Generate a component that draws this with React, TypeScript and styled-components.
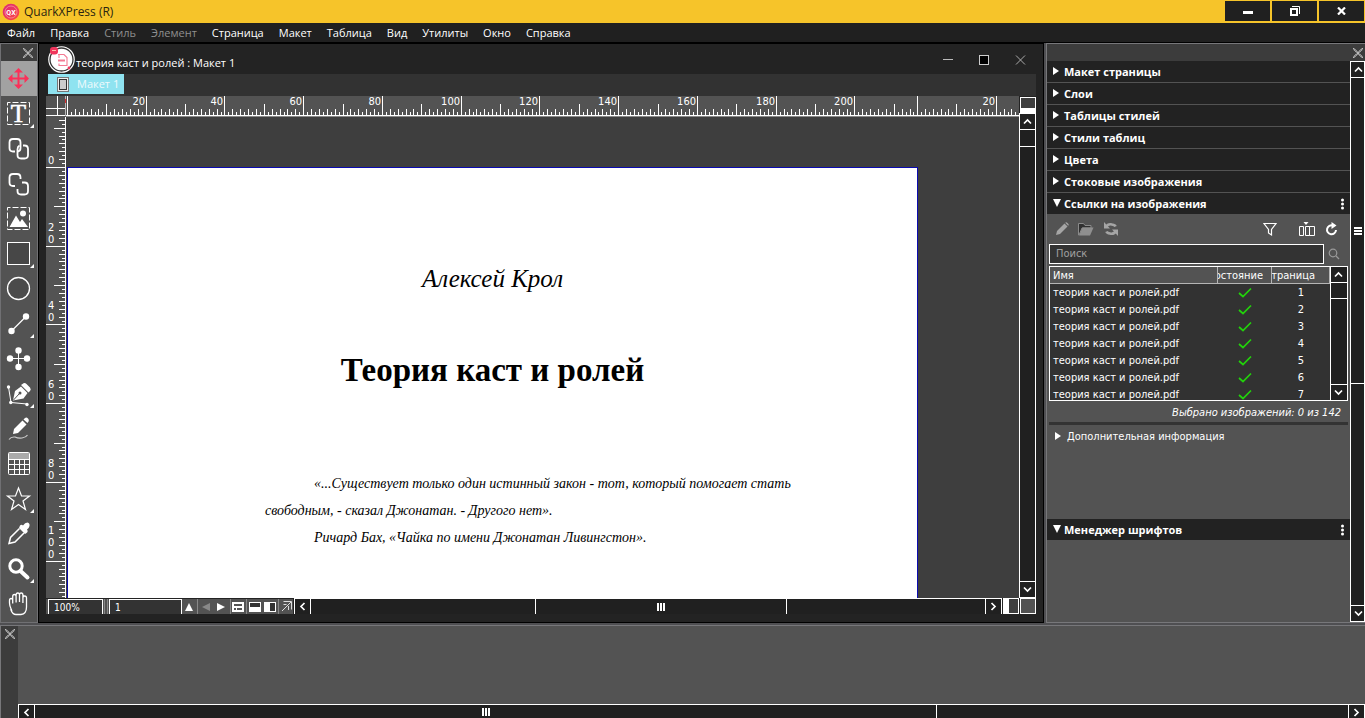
import React, { useLayoutEffect, useRef, useState } from "react";
import styled, { createGlobalStyle, css } from "styled-components";

const ui = `"Open Sans", "Noto Sans", sans-serif`;
const dense = `"DejaVu Sans Condensed", "DejaVu Sans", sans-serif`;
const serif = `"Liberation Serif", "Times New Roman", serif`;

const Global = createGlobalStyle`
  * { box-sizing: border-box; }
  body { margin: 0; background: #535353; color: #fff; font: 11px/16px ${ui}; overflow: hidden; }
  button { border: 0; padding: 0; margin: 0; background: none; color: inherit; font: inherit; }
  svg { display: block; }
`;

const Shell = styled.div`
  display: flex;
  flex-direction: column;
  height: 100vh;
  background: #4f4f52;
`;

/* ---------- application frame ---------- */

const AppBar = styled.header`
  display: flex;
  align-items: center;
  height: 23px;
  flex: none;
  padding: 0 1px 0 2px;
  gap: 4px;
  background: #f6c42a;
  color: #2b2410;
`;
const AppTitle = styled.h1`
  flex: 1;
  margin: 0;
  font-size: 12px;
  font-weight: 400;
`;
const FrameButtons = styled.div`
  display: flex;
  align-items: flex-start;
  gap: 2px;
  height: 21px;
`;
const FrameButton = styled.button`
  display: grid;
  place-items: center;
  width: 45px;
  height: 20px;
  background: #202020;
`;

const MenuBar = styled.nav`
  display: flex;
  align-items: center;
  gap: 15px;
  height: 20px;
  flex: none;
  padding: 0 7px;
  background: #202020;
  border-bottom: 1px solid #000;
`;
const MenuItem = styled.button`
  &:disabled { color: #8f8f8f; }
`;

const Workspace = styled.main`
  display: flex;
  flex: 1;
  min-height: 0;
`;

/* ---------- tools ---------- */

const Tools = styled.aside`
  display: flex;
  flex-direction: column;
  width: 38px;
  flex: none;
  background: #535353;
  border: 1px solid #707073;
  overflow: hidden;
`;
const ToolsHead = styled.div`
  display: flex;
  justify-content: flex-end;
  align-items: center;
  height: 17px;
  flex: none;
  padding-right: 4px;
  background: #3e3e3e;
`;
const ToolButton = styled.button<{ $active?: boolean }>`
  height: 35px;
  flex: none;
  color: #fff;
  ${(p) => p.$active && css`background: #a2a2a2; color: #fb3059;`}
`;

/* ---------- document window ---------- */

const DocWindow = styled.section`
  display: flex;
  flex-direction: column;
  flex: 1;
  min-width: 0;
  padding: 0 7px 8px;
  background: #232323;
  border: 1px solid #000;
`;
const DocBar = styled.div`
  display: flex;
  align-items: center;
  height: 30px;
  flex: none;
  padding: 0 8px 0 2px;
`;
const DocTitle = styled.h2`
  flex: 1;
  margin: 0;
  padding-top: 7px;
  font-size: 11px;
  font-weight: 400;
`;
const DocButtons = styled.div`
  display: flex;
  gap: 22px;
  padding: 2px 1px 0 0;
`;
const DocButton = styled.button`
  width: 14px;
  height: 14px;
`;
const Tabs = styled.div`
  display: flex;
  height: 22px;
  flex: none;
  margin-left: 2px;
  background: #323232;
`;
const Tab = styled.button`
  display: flex;
  align-items: center;
  gap: 8px;
  width: 76px;
  height: 20px;
  padding-left: 9px;
  background: #8fe3f0;
  color: #eefafc;
`;
const Board = styled.div`
  display: grid;
  grid-template-columns: 20px minmax(0, 1fr) 17px;
  grid-template-rows: 21px minmax(0, 1fr) 16px;
  flex: 1;
  min-height: 0;
`;
const RulerCell = styled.div`
  background: #535353;
  overflow: hidden;
  text { font: 11px ${dense}; fill: #fff; }
`;
const Canvas = styled.div`
  background: #3e3e3e;
  overflow: hidden;
  padding: 50px 0 0 1px;
`;
const SideColumn = styled.div`
  display: flex;
  flex-direction: column;
  grid-row: 1 / span 2;
  grid-column: 3;
  min-height: 0;
`;
const SplitButton = styled.button<{ $side: "top" | "left" }>`
  width: 16px;
  height: 16px;
  flex: none;
  background: #3e3e3e;
  border: 1px solid #fff;
  ${(p) => (p.$side === "top" ? css`margin: 1px 0 0 1px; border-bottom-width: 5px;` : css`border-left-width: 6px;`)}
`;
const Footer = styled.div`
  display: flex;
  grid-column: 1 / span 3;
  gap: 1px;
  min-width: 0;
`;
const FooterTools = styled.div`
  display: flex;
  flex: none;
  width: 247px;
  padding-left: 2px;
  background: #535353;
  border-top: 1px solid #232323;
`;
const FooterInput = styled.input<{ $w: number }>`
  width: ${(p) => p.$w}px;
  height: 15px;
  padding: 0 5px;
  background: #333;
  color: #fff;
  border: 1px solid #fff;
  border-bottom: 0;
  border-radius: 0;
  font: 10px ${dense};
`;
const Divider = styled.i`
  width: 1px;
  margin: 0 1px;
  background: #888;
`;
const FooterButton = styled.button<{ $w: number }>`
  display: grid;
  place-items: center;
  width: ${(p) => p.$w}px;
`;
const GrowBox = styled.span`
  width: 16px;
  height: 16px;
  background: #535353;
  border: 1px solid #fff;
`;

const Paper = styled.article`
  width: 851px;
  height: 1100px;
  padding-top: 96px;
  background: #fff;
  border: 1px solid #0a0ab0;
  color: #000;
  font-family: ${serif};
  font-style: italic;
`;
const Author = styled.p`
  margin: 0;
  font-size: 25px;
  line-height: 30px;
  text-align: center;
`;
const BookTitle = styled.h3`
  margin: 56px 0 0;
  font-size: 33px;
  line-height: 40px;
  font-style: normal;
  text-align: center;
`;
const Epigraph = styled.div`
  margin: 80px 0 0 197px;
  font-size: 14px;
  line-height: 27px;
`;
const Line = styled.p<{ $indent?: boolean }>`
  margin: 0;
  padding-left: ${(p) => (p.$indent ? 49 : 0)}px;
  white-space: nowrap;
`;

/* ---------- scroll bars ---------- */

const Scroll = styled.div<{ $vertical?: boolean }>`
  display: flex;
  flex: 1;
  min-width: 0;
  min-height: 0;
  background: #202020;
  border: 1px solid #fff;
  ${(p) => (p.$vertical ? css`flex-direction: column; width: 17px;` : css`border-bottom: 0;`)}
`;
const ScrollButton = styled.button`
  display: grid;
  place-items: center;
  width: 15px;
  height: 15px;
  flex: none;
`;
const Track = styled.div<{ $grow: number }>`
  flex: ${(p) => p.$grow} 1 0px;
  min-width: 0;
  min-height: 0;
`;
const Thumb = styled.div<{ $grow: number; $vertical?: boolean }>`
  display: grid;
  place-items: center;
  flex: ${(p) => p.$grow} 1 0px;
  border: 0 solid #fff;
  ${(p) => (p.$vertical ? css`border-width: 1px 0;` : css`border-width: 0 1px;`)}
`;
const Edge = styled.i<{ $vertical?: boolean }>`
  flex: none;
  background: #fff;
  ${(p) => (p.$vertical ? css`height: 1px;` : css`width: 1px;`)}
`;

/* ---------- palettes ---------- */

const Palettes = styled.aside`
  display: flex;
  flex-direction: column;
  width: 319px;
  flex: none;
  margin-left: 2px;
  background: #535353;
  border: 1px solid #77777a;
  border-right: 0;
`;
const PalettesHead = styled.div`
  display: flex;
  align-items: center;
  justify-content: flex-end;
  height: 17px;
  flex: none;
  padding-right: 2px;
  background: #3c3c3c;
`;
const PalettesBody = styled.div`
  display: flex;
  flex: 1;
  min-height: 0;
`;
const PaletteList = styled.div`
  flex: 1;
  min-width: 0;
  overflow: hidden;
`;
const PaletteScroll = styled.div`
  display: flex;
  width: 15px;
  overflow: hidden;
`;
const PaletteHeader = styled.button`
  display: flex;
  align-items: center;
  width: 100%;
  height: 22px;
  padding: 0 4px 0 5px;
  gap: 3px;
  background: #222;
  border-bottom: 1px solid #535353;
  font-weight: 700;
  text-align: left;
`;
const Grow = styled.span`
  flex: 1;
`;
const LinksPanel = styled.div`
  height: 304px;
  padding: 0 2px;
`;
const IconRow = styled.div`
  display: flex;
  align-items: center;
  gap: 9px;
  height: 29px;
  padding: 0 10px 1px 6px;
`;
const IconButton = styled.button<{ $w: number; $dim?: boolean }>`
  width: ${(p) => p.$w}px;
  color: ${(p) => (p.$dim ? "#a5a5a5" : "#fff")};
`;
const SearchRow = styled.div`
  display: flex;
  align-items: center;
  gap: 4px;
`;
const SearchInput = styled.input`
  flex: 0 0 275px;
  height: 20px;
  padding: 0 6px 2px;
  background: #333;
  border: 1px solid #fff;
  border-radius: 0;
  font: 11px ${dense};
  color: #fff;
  &::placeholder { color: #a0a0a0; opacity: 1; }
`;
const ListBox = styled.div`
  display: flex;
  width: 299px;
  height: 135px;
  margin-top: 2px;
  border: 1px solid #fff;
  background: #323232;
`;
const ListClip = styled.div`
  flex: 1;
  overflow: hidden;
`;
const LinksTable = styled.table`
  width: 100%;
  table-layout: fixed;
  border-collapse: separate;
  border-spacing: 0;
  font: 11px/16px ${dense};
`;
const Th = styled.th<{ $w?: number; $pad?: number }>`
  width: ${(p) => (p.$w ? `${p.$w}px` : "auto")};
  height: 17px;
  padding: 1px ${(p) => p.$pad ?? 0}px 0 ${(p) => (p.$pad ? 0 : 3)}px;
  background: #535353;
  border-right: 1px solid #b5b5b5;
  border-bottom: 1px solid #b5b5b5;
  font-weight: 400;
  line-height: 15px;
  text-align: left;
`;
const ThClip = styled.div<{ $end?: boolean }>`
  display: flex;
  justify-content: ${(p) => (p.$end ? "flex-end" : "flex-start")};
  overflow: hidden;
`;
const Td = styled.td<{ $center?: boolean }>`
  height: 17px;
  padding: 1px 0 0 ${(p) => (p.$center ? 0 : 3)}px;
  text-align: ${(p) => (p.$center ? "center" : "left")};
  white-space: nowrap;
  svg { margin: 0 auto; }
`;
const ListScroll = styled.div`
  display: flex;
  width: 18px;
  margin: -1px -1px -1px 0;
`;
const Summary = styled.p`
  margin: 0;
  padding: 5px 7px 0 0;
  height: 21px;
  font: italic 11px/14px ${dense};
  text-align: right;
`;
const More = styled.button`
  display: flex;
  align-items: center;
  gap: 4px;
  width: 299px;
  padding: 4px 0 0 5px;
  border-top: 3px solid #333;
  font: 11px/15px ${dense};
`;

/* ---------- measurements ---------- */

const Measurements = styled.section`
  display: flex;
  height: 93px;
  flex: none;
  margin-top: 2px;
  background: #535353;
  border: 1px solid #77777a;
  border-width: 1px 0 0 1px;
  overflow: hidden;
`;
const MeasureGrip = styled.div`
  width: 17px;
  padding: 3px 0 0 4px;
  background: #3c3c3c;
`;
const MeasureBody = styled.div`
  display: flex;
  flex-direction: column;
  flex: 1;
`;
const MeasureArea = styled.div`
  height: 78px;
  flex: none;
`;

/* ---------- drawings ---------- */

const arrows = {
  up: "M4 9.5 7.5 6 11 9.5",
  down: "M4 5.5 7.5 9 11 5.5",
  left: "M9.5 4 6 7.5 9.5 11",
  right: "M5.5 4 9 7.5 5.5 11",
};
const Arrow = ({ to }: { to: keyof typeof arrows }) => (
  <svg width="15" height="15"><path d={arrows[to]} fill="none" stroke="#fff" strokeWidth="1.7" /></svg>
);
const Grip = ({ vertical }: { vertical?: boolean }) => (
  <svg width="8" height="8" fill="#fff" shapeRendering="crispEdges">
    {vertical ? <path d="M0 0h8v2H0zM0 3h8v2H0zM0 6h8v2H0z" /> : <path d="M0 0h2v8H0zM3 0h2v8H3zM6 0h2v8H6z" />}
  </svg>
);
const Cross = () => (
  <svg width="10" height="10"><path d="m0 0 10 10M10 0 0 10" stroke="#bdbdbd" strokeWidth="1.8" strokeDasharray="1.4 0.4" /></svg>
);

const MORE = <path d="M33 28v4h-4z" fill="#fff" />;
const dash = <rect x="6.5" y="6.5" width="22" height="22" fill="none" stroke="#fff" strokeDasharray="6 2" strokeDashoffset="3" />;

const toolList: { name: string; art: React.ReactNode; more?: boolean }[] = [
  {
    name: "Элемент",
    art: (
      <g fill="currentColor">
        <path d="M16.5 10h2v6.5H25v2h-6.5V25h-2v-6.5H10v-2h6.5z" />
        <path d="M17.5 7 22 11.5h-9zM17.5 28 22 23.5h-9zM7 17.5 11.5 13v9zM28 17.5 23.5 13v9z" />
      </g>
    ),
  },
  {
    name: "Текст",
    more: true,
    art: <>{dash}<text x="17.5" y="26" textAnchor="middle" fontFamily="Liberation Serif" fontSize="25" fill="#fff" stroke="#fff" strokeWidth="0.6">T</text></>,
  },
  {
    name: "Связать",
    art: (
      <g fill="none" stroke="#fff" strokeWidth="1.8">
        <path d="M14 20.5h-2q-3.500 0-3.500-3.500v-5.500Q8.500 8 12 8h4q3.500 0 3.500 3.500V17q0 3-2.500 3.500" />
        <path d="M22 14.500h1.500q3.500 0 3.500 3.500v6q0 3.500-3.500 3.500h-3.500q-3.500 0-3.500-3.500v-5.500q0-3 2-4" />
      </g>
    ),
  },
  {
    name: "Разорвать связь",
    art: (
      <g fill="none" stroke="#fff" strokeWidth="1.8">
        <path d="M14 20h-2q-3.500 0-3.500-3.500v-5Q8.500 8 12 8h4q3.500 0 3.500 3.500V13" />
        <path d="M21 16.500h2.500q3.500 0 3.500 3.500v5q0 3.500-3.500 3.500h-3.500q-3.500 0-3.500-3.500v-2" />
      </g>
    ),
  },
  {
    name: "Изображение",
    art: <>{dash}<path d="M8.500 26 15 14.500l4 6.500 2-3 6 8z" fill="#fff" /><circle cx="22" cy="12.500" r="3" fill="#fff" /></>,
  },
  { name: "Прямоугольник", more: true, art: <rect x="6.500" y="6.500" width="22" height="22" fill="#474747" stroke="#fff" /> },
  { name: "Овал", art: <circle cx="17.500" cy="17.500" r="11" fill="#4b4b4b" stroke="#fff" strokeWidth="1.300" /> },
  {
    name: "Линия",
    more: true,
    art: <g fill="#fff"><path d="M10.500 25 25 10.500" stroke="#fff" strokeWidth="1.300" /><circle cx="10.500" cy="25" r="3.200" /><circle cx="25" cy="10.500" r="3.200" /></g>,
  },
  {
    name: "Композиция",
    art: (
      <g fill="#fff">
        <path d="M9 17.500h17M17.500 9v17" stroke="#fff" />
        <circle cx="17.500" cy="9.500" r="3.200" /><circle cx="17.500" cy="26" r="3.200" /><circle cx="9" cy="17.500" r="3.200" /><circle cx="26" cy="17.500" r="3.200" />
      </g>
    ),
  },
  {
    name: "Перо Безье",
    more: true,
    art: (
      <g fill="#fff">
        <path d="M7.500 11 10 26.500 26 28" fill="none" stroke="#fff" />
        <circle cx="7.500" cy="11" r="1.700" /><circle cx="9.800" cy="26.500" r="1.700" /><circle cx="26" cy="28.500" r="1.700" />
        <path d="M12 24.500 14 15 20 10.500 26.500 17 22.500 22.500z" />
        <path d="M21.500 8q2-2 4 0l3.500 3.500q1.500 2 0 3.500l-1.500 1.500-7.500-7.500z" />
        <path d="M12.500 24 18.500 17.500" stroke="#535353" /><circle cx="19" cy="17" r="1.500" fill="#535353" />
      </g>
    ),
  },
  {
    name: "Рисование от руки",
    art: (
      <g fill="#fff">
        <path d="M12 23 13 18 21.500 9.500 25.500 13.500 17 22z" />
        <path d="M22.500 8.500 24 7q1.500-1 3 .5t.5 3L26.500 12z" />
        <path d="M8 28.500q2-3 6-2.500 3 1.500 7 1 4-.5 5.500-3" fill="none" stroke="#ccc" strokeWidth="1.100" />
      </g>
    ),
  },
  {
    name: "Таблица",
    art: (
      <g>
        <path d="M8 7h20v6H8z" fill="#aaa" />
        <rect x="7.500" y="6.500" width="21" height="22" rx="1" fill="none" stroke="#fff" />
        <path d="M8 13.500h20M8 18.500h20M8 23.500h20M13.500 13v15M18.500 13v15M23.500 13v15" stroke="#fff" />
      </g>
    ),
  },
  {
    name: "Звезда",
    more: true,
    art: <path d="m17.500 7 3 8h8l-6.500 5 2.500 8.500-7-5-7 5L13 20l-6.500-5h8z" fill="none" stroke="#fff" strokeWidth="1.200" />,
  },
  {
    name: "Пипетка",
    art: (
      <g fill="#fff">
        <path d="M19 9.500q1.500-1.500 3 0 2-3 4.500-3 2.500.5 2 3.500-.5 2-2.500 3.500 1.500 2-.500 3.500l-1.500 1-6-6z" />
        <path d="M18.500 12.500 9.500 21.500 8 27.500l6-1.500 9-9" fill="none" stroke="#fff" strokeWidth="1.500" />
      </g>
    ),
  },
  {
    name: "Масштаб",
    more: true,
    art: <g fill="none" stroke="#fff"><circle cx="15" cy="15" r="6.200" strokeWidth="3" /><path d="m19.500 20 7 6.500" strokeWidth="4" strokeLinecap="round" /></g>,
  },
  {
    name: "Рука",
    art: (
      <path
        d="M10.500 24Q8.500 20 8.500 17v-2.500q0-2 1.600-2t1.600 2v3-7q0-2 1.700-2t1.700 2v6-7.500q0-2 1.700-2t1.700 2V16v-7q0-2 1.700-2t1.700 2v8-5q0-2 1.800-2t1.800 2v6 3q0 7-5.500 7.500h-5q-3.500 0-5-4.500z"
        fill="none" stroke="#fff" strokeWidth="1.300"
      />
    ),
  },
];

const AppLogo = () => (
  <svg width="18" height="18">
    <defs><linearGradient id="lg" x1="0" y1="0" x2="1" y2="1"><stop offset="0" stopColor="#d9287f" /><stop offset="1" stopColor="#ff4a3a" /></linearGradient></defs>
    <circle cx="9" cy="9" r="8.300" fill="url(#lg)" />
    <circle cx="9" cy="9" r="6" fill="none" stroke="#f9a0a5" strokeWidth="0.700" />
    <text x="9" y="12" textAnchor="middle" fontFamily="Roboto" fontWeight="700" fontSize="7" fill="#fff">QX</text>
  </svg>
);
const DocLogo = () => (
  <svg width="28" height="28" viewBox="0 -1 28 28" overflow="visible">
    <circle cx="13.500" cy="13.500" r="13.300" fill="#fff" />
    <circle cx="13.500" cy="13.500" r="11.500" fill="none" stroke="#333" strokeWidth="1.300" />
    <path d="M10 8.500h6l3 3V19.500H11v-2M11 9v3" fill="none" stroke="#f47a93" strokeWidth="1.100" />
    <path d="M10 13.500h7v2h-7z" fill="#f47a93" />
    <circle cx="21" cy="22" r="1.400" fill="#f0355c" />
    <rect x="2" y="1" width="8" height="7.500" rx="3" fill="#f0355c" />
    <path d="M4 4.500h4" stroke="#fba" />
  </svg>
);
const Triangle = ({ open }: { open?: boolean }) => (
  <svg width="9" height="9" fill="#fff">{open ? <path d="M1 0h8L5 8z" /> : <path d="M1 0v8l6-4z" />}</svg>
);
const Kebab = () => (
  <svg width="7" height="12" fill="#fff"><circle cx="3.500" cy="2" r="1.500" /><circle cx="3.500" cy="6" r="1.500" /><circle cx="3.500" cy="10" r="1.500" /></svg>
);
const Check = () => (
  <svg width="14" height="12"><path d="M1 6 5 9.500 13 1.500" fill="none" stroke="#22d30b" strokeWidth="1.700" /></svg>
);

/* ---------- rulers ---------- */

const MM = 3.937;
const PAGE_MM = 216;
const tickSize = (mm: number) => (mm % 20 === 0 ? 19 : mm % 10 === 0 ? 11 : mm % 2 === 0 ? 6 : 3);

/* Visible size of a ruler, so that marks are only made for what is on screen. */
function useSize() {
  const ref = useRef<SVGSVGElement>(null);
  const [size, setSize] = useState({ width: 0, height: 0 });
  useLayoutEffect(() => {
    const node = ref.current!;
    const read = () => {
      const box = node.getBoundingClientRect();
      setSize({ width: box.width, height: box.height });
    };
    read();
    const watcher = new ResizeObserver(read);
    watcher.observe(node);
    return () => watcher.disconnect();
  }, []);
  return { ref, ...size };
}

const HorizontalRuler = () => {
  const { ref, width } = useSize();
  const marks: React.ReactNode[] = [];
  [1, 851].forEach((origin) => {
    for (let mm = 0; mm < PAGE_MM; mm++) {
      const x = origin + Math.round(mm * MM);
      if (x >= width) break;
      const h = tickSize(mm);
      marks.push(<rect key={`${origin}-${mm}`} x={x} y={19 - h} width="1" height={h} fill="#fff" />);
      if (mm > 0 && mm % 20 === 0) marks.push(<text key={`t${origin}-${mm}`} x={x - 1} y="9" textAnchor="end">{mm}</text>);
    }
  });
  return (
    <svg ref={ref} width="100%" height="21">
      {marks}
      <rect y="19" width="100%" height="1" fill="#fff" />
      <rect y="20" width="100%" height="1" fill="#888" />
    </svg>
  );
};

const VerticalRuler = () => {
  const { ref, height } = useSize();
  const marks: React.ReactNode[] = [];
  for (let mm = -12; 50 + mm * MM < height; mm++) {
    const y = 50 + Math.round(mm * MM);
    const w = tickSize(mm);
    marks.push(<rect key={mm} x={19 - w} y={y} width={w} height="1" fill="#fff" />);
    if (mm >= 0 && mm % 20 === 0) {
      const digits = String(mm).split("");
      digits.forEach((d, i) =>
        marks.push(<text key={`${mm}-${i}`} x="2" y={y - 3 - (digits.length - 1 - i) * 12}>{d}</text>)
      );
    }
  }
  return (
    <svg ref={ref} width="20" height="100%">
      {marks}
      <rect x="19" width="1" height="100%" fill="#fff" />
    </svg>
  );
};

const RulerCorner = () => (
  <svg width="20" height="21" fill="#fff">
    <rect x="11" width="1" height="20" /><rect y="12" width="20" height="1" /><rect y="19" width="20" height="1" />
    <rect x="19" width="1" height="20" fill="#b9b9b9" /><rect x="19" y="3" width="1" height="4" fill="#e03030" />
  </svg>
);

/* ---------- page ---------- */

const menus: [string, boolean?][] = [
  ["Файл"], ["Правка"], ["Стиль", true], ["Элемент", true], ["Страница"], ["Макет"],
  ["Таблица"], ["Вид"], ["Утилиты"], ["Окно"], ["Справка"],
];
const closedPalettes = ["Макет страницы", "Слои", "Таблицы стилей", "Стили таблиц", "Цвета", "Стоковые изображения"];
const pages = [1, 2, 3, 4, 5, 6, 7];

export default function App() {
  return (
    <Shell>
      <Global />
      <AppBar>
        <AppLogo />
        <AppTitle>QuarkXPress (R)</AppTitle>
        <FrameButtons>
          <FrameButton aria-label="Свернуть"><svg width="10" height="10"><path d="M0 5h10v3H0z" fill="#fff" /></svg></FrameButton>
          <FrameButton aria-label="Восстановить">
            <svg width="10" height="10" fill="none" stroke="#fff"><rect x="1" y="3" width="6" height="6" strokeWidth="2" /><path d="M2 .5h7.500V8" /></svg>
          </FrameButton>
          <FrameButton aria-label="Закрыть"><svg width="9" height="8"><path d="m1 .5 7 7M8 .5l-7 7" stroke="#fff" strokeWidth="2.200" /></svg></FrameButton>
        </FrameButtons>
      </AppBar>
      <MenuBar>
        {menus.map(([label, off]) => <MenuItem key={label} disabled={off}>{label}</MenuItem>)}
      </MenuBar>

      <Workspace>
        <Tools>
          <ToolsHead><Cross /></ToolsHead>
          {toolList.map((t, i) => (
            <ToolButton key={t.name} $active={i === 0} aria-label={t.name}>
              <svg width="36" height="35">{t.art}{t.more && MORE}</svg>
            </ToolButton>
          ))}
        </Tools>

        <DocWindow>
          <DocBar>
            <DocLogo />
            <DocTitle>теория каст и ролей : Макет 1</DocTitle>
            <DocButtons>
              <DocButton aria-label="Свернуть окно"><svg width="14" height="14"><path d="M2 6.500h10" stroke="#bbb" /></svg></DocButton>
              <DocButton aria-label="Развернуть окно"><svg width="14" height="14"><rect x="2.500" y="2.500" width="9" height="9" fill="#000" stroke="#ccc" /></svg></DocButton>
              <DocButton aria-label="Закрыть окно"><svg width="14" height="14"><path d="m3 2.500 9 9M12 2.500l-9 9" stroke="#aaa" /></svg></DocButton>
            </DocButtons>
          </DocBar>
          <Tabs>
            <Tab>
              <svg width="12" height="15"><rect x="0.500" y="0.500" width="11" height="14" fill="#eee" stroke="#777" /><rect x="2.500" y="2.500" width="7" height="10" fill="#ccc" stroke="#333" /></svg>
              Макет 1
            </Tab>
          </Tabs>
          <Board>
            <RulerCell><RulerCorner /></RulerCell>
            <RulerCell><HorizontalRuler /></RulerCell>
            <RulerCell><VerticalRuler /></RulerCell>
            <Canvas>
              <Paper>
                <Author>Алексей Крол</Author>
                <BookTitle>Теория каст и ролей</BookTitle>
                <Epigraph>
                  <Line $indent>«...Существует только один истинный закон - тот, который помогает стать</Line>
                  <Line>свободным, - сказал Джонатан. - Другого нет».</Line>
                  <Line $indent>Ричард Бах, «Чайка по имени Джонатан Ливингстон».</Line>
                </Epigraph>
              </Paper>
            </Canvas>
            <SideColumn>
              <SplitButton $side="top" aria-label="Разделить по горизонтали" />
              <Scroll $vertical>
                <ScrollButton aria-label="Вверх"><Arrow to="up" /></ScrollButton>
                <Thumb $vertical $grow={16} />
                <Track $grow={434} />
                <Edge $vertical />
                <ScrollButton aria-label="Вниз"><Arrow to="down" /></ScrollButton>
              </Scroll>
            </SideColumn>
            <Footer>
              <FooterTools>
                <FooterInput $w={55} aria-label="Масштаб просмотра" defaultValue="100%" />
                <Divider /><Divider />
                <FooterInput $w={73} aria-label="Номер страницы" defaultValue="1" />
                <FooterButton $w={14} aria-label="Список страниц"><svg width="8" height="8"><path d="M4 0 8 8H0z" fill="#fff" /></svg></FooterButton>
                <Divider />
                <FooterButton $w={14} aria-label="Предыдущая"><svg width="8" height="8"><path d="M8 0v8L0 4z" fill="#888" /></svg></FooterButton>
                <FooterButton $w={16} aria-label="Следующая"><svg width="8" height="8"><path d="M0 0v8l8-4z" fill="#fff" /></svg></FooterButton>
                <Divider />
                <FooterButton $w={14} aria-label="Шаблоны"><svg width="12" height="10"><rect width="12" height="10" fill="#fff" /><path d="M2 2h8v2H2zM2 6h2v2H2zM5 6h5v2H5z" fill="#555" /></svg></FooterButton>
                <Divider />
                <FooterButton $w={14} aria-label="Делить по горизонтали"><svg width="12" height="10"><rect x=".5" y=".5" width="11" height="9" fill="#333" stroke="#fff" /><path d="M1 5h10v4H1z" fill="#fff" /></svg></FooterButton>
                <FooterButton $w={15} aria-label="Делить по вертикали"><svg width="12" height="10"><rect x=".5" y=".5" width="11" height="9" fill="#333" stroke="#fff" /><path d="M1 1h5v8H1z" fill="#fff" /></svg></FooterButton>
                <Divider />
                <FooterButton $w={13} aria-label="Экспорт"><svg width="11" height="11" fill="none" stroke="#ddd"><path d="M2.500.5h8v8M10 1 1 10M2.500 3.500h3M7.500 5v4" /></svg></FooterButton>
              </FooterTools>
              <Scroll>
                <ScrollButton aria-label="Влево"><Arrow to="left" /></ScrollButton>
                <Edge />
                <Track $grow={225} />
                <Thumb $grow={251}><Grip /></Thumb>
                <Track $grow={199} />
                <Edge />
                <ScrollButton aria-label="Вправо"><Arrow to="right" /></ScrollButton>
              </Scroll>
              <SplitButton $side="left" aria-label="Разделить по вертикали" />
              <GrowBox />
            </Footer>
          </Board>
        </DocWindow>

        <Palettes>
          <PalettesHead><Cross /></PalettesHead>
          <PalettesBody>
            <PaletteList>
              {closedPalettes.map((name) => <PaletteHeader key={name}><Triangle />{name}</PaletteHeader>)}
              <PaletteHeader><Triangle open />Ссылки на изображения<Grow /><Kebab /></PaletteHeader>
              <LinksPanel>
                <IconRow>
                  <IconButton $w={14} $dim aria-label="Изменить">
                    <svg width="14" height="14" fill="currentColor"><path d="M1 13 2 9 9.500 1.500 12.500 4.500 5 12z" /><path d="M10.200.8q1-1 2 0l1 1q1 1 0 2z" /></svg>
                  </IconButton>
                  <IconButton $w={16} $dim aria-label="Открыть папку">
                    <svg width="16" height="13"><path d="M.5.5h5L7 2.500h6V5H4L1 12H.5z" fill="#303030" stroke="#8a8a8a" /><path d="M4.500 4.500H15.500L12 12.500H1z" fill="#8f8f8f" /></svg>
                  </IconButton>
                  <IconButton $w={16} $dim aria-label="Обновить связь">
                    <svg width="16" height="14" fill="none" stroke="currentColor" strokeWidth="2.600"><path d="M3 5q2-3.500 6-2.500 3 .5 3.500 2M13 9q-2 3.500-6 2.500-3-.5-3.500-2" /><path d="M1 0v6.500h6zM15 14V7.500H9z" fill="currentColor" stroke="none" /></svg>
                  </IconButton>
                  <Grow />
                  <IconButton $w={14} aria-label="Фильтр">
                    <svg width="14" height="15" fill="none" stroke="currentColor" strokeWidth="1.200"><path d="M1 1.500h12L8.500 7.500v5.500l-3-2V7.500z" /></svg>
                  </IconButton>
                  <IconButton $w={30} aria-label="Столбцы">
                    <svg width="30" height="15" fill="none" stroke="currentColor"><path d="M13.500 4.500h4v9h-4zM19.500 4.500h4v9h-4zM23.500 4.500h5v9h-5z" /><path d="M17.500 0h5L20 3z" fill="currentColor" stroke="none" /></svg>
                  </IconButton>
                  <IconButton $w={13} aria-label="Обновить">
                    <svg width="13" height="14" fill="none" stroke="currentColor" strokeWidth="2"><path d="M8 3.500A4.500 4.500 0 1 0 11 8" /><path d="M6.500 0v7l5-3.500z" fill="currentColor" stroke="none" /></svg>
                  </IconButton>
                </IconRow>
                <SearchRow>
                  <SearchInput type="text" aria-label="Поиск" placeholder="Поиск" />
                  <IconButton $w={12} $dim aria-label="Найти">
                    <svg width="12" height="12" fill="none" stroke="#999" strokeWidth="1.200"><circle cx="5" cy="5" r="3.800" /><path d="m8 8 3 3" /></svg>
                  </IconButton>
                </SearchRow>
                <ListBox>
                  <ListClip>
                    <LinksTable>
                      <thead>
                        <tr>
                          <Th><ThClip>Имя</ThClip></Th>
                          <Th $w={54} $pad={8}><ThClip $end>Состояние</ThClip></Th>
                          <Th $w={58} $pad={14}><ThClip $end>Страница</ThClip></Th>
                        </tr>
                      </thead>
                      <tbody>
                        {pages.map((n) => (
                          <tr key={n}><Td>теория каст и ролей.pdf</Td><Td $center><Check /></Td><Td $center>{n}</Td></tr>
                        ))}
                      </tbody>
                    </LinksTable>
                  </ListClip>
                  <ListScroll>
                    <Scroll $vertical>
                      <ScrollButton aria-label="Вверх"><Arrow to="up" /></ScrollButton>
                      <Thumb $vertical $grow={15} />
                      <Track $grow={84} />
                      <Edge $vertical />
                      <ScrollButton aria-label="Вниз"><Arrow to="down" /></ScrollButton>
                    </Scroll>
                  </ListScroll>
                </ListBox>
                <Summary>Выбрано изображений: 0 из 142</Summary>
                <More><Triangle />Дополнительная информация</More>
              </LinksPanel>
              <PaletteHeader><Triangle open />Менеджер шрифтов<Grow /><Kebab /></PaletteHeader>
            </PaletteList>
            <PaletteScroll>
              <Scroll $vertical>
                <ScrollButton aria-label="Вверх"><Arrow to="up" /></ScrollButton>
                <Thumb $vertical $grow={305}><Grip vertical /></Thumb>
                <Track $grow={221} />
                <Edge $vertical />
                <ScrollButton aria-label="Вниз"><Arrow to="down" /></ScrollButton>
              </Scroll>
            </PaletteScroll>
          </PalettesBody>
        </Palettes>
      </Workspace>

      <Measurements>
        <MeasureGrip><Cross /></MeasureGrip>
        <MeasureBody>
          <MeasureArea />
          <Scroll>
            <ScrollButton aria-label="Влево"><Arrow to="left" /></ScrollButton>
            <Thumb $grow={902}><Grip /></Thumb>
            <Track $grow={411} />
            <Edge />
            <ScrollButton aria-label="Вправо"><Arrow to="right" /></ScrollButton>
          </Scroll>
        </MeasureBody>
      </Measurements>
    </Shell>
  );
}
